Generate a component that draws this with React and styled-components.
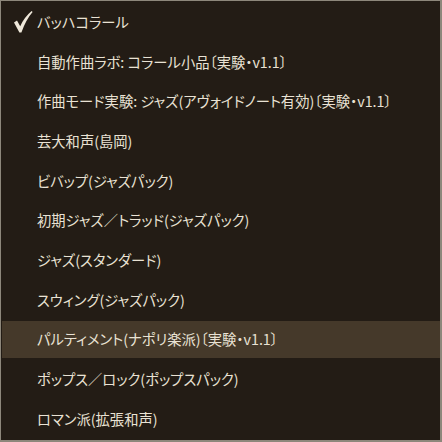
import React from 'react'
import styled, { createGlobalStyle } from 'styled-components'

const GlobalStyle = createGlobalStyle`
  html, body {
    margin: 0;
    padding: 0;
    background: #231c15;
  }
  * { box-sizing: border-box; }
`;

const items = [
  { label: "バッハコラール", checked: true },
  { label: "自動作曲ラボ: コラール小品〔実験・v1.1〕" },
  { label: "作曲モード実験: ジャズ(アヴォイドノート有効)〔実験・v1.1〕" },
  { label: "芸大和声(島岡)" },
  { label: "ビバップ(ジャズパック)" },
  { label: "初期ジャズ／トラッド(ジャズパック)" },
  { label: "ジャズ(スタンダード)" },
  { label: "スウィング(ジャズパック)" },
  { label: "パルティメント(ナポリ楽派)〔実験・v1.1〕", active: true },
  { label: "ポップス／ロック(ポップスパック)" },
  { label: "ロマン派(拡張和声)" },
];

const Check = () => (
  <svg width="19" height="22" viewBox="0 0 19 22">
    <path
      d="M0 11.5 L3 9.5 L6.2 15.2 Q10 6.5 17.6 0 L18.6 1 Q12 8.5 7.4 21.5 L5.4 21.5 Z"
      fill="#efe8da"
    />
  </svg>
);

const Menu = () => (
  <MenuBox>
    {items.map((item) => (
      <Row key={item.label} $active={item.active}>
        <CheckSlot>{item.checked && <Check />}</CheckSlot>
        <Label>{item.label}</Label>
      </Row>
    ))}
  </MenuBox>
);

const App = () => (
  <>
    <GlobalStyle />
    <Menu />
  </>
);

const MenuBox = styled.div`
  width: 442px;
  height: 442px;
  display: flex;
  flex-direction: column;
  gap: 2.7px;
  padding: 2.5px 0 2.5px 1px;
  background: #231c15;
  border-style: solid;
  border-color: #8d877b;
  border-width: 1px 2px 2px 1px;
  font-family: "Noto Sans CJK JP", "Noto Sans", sans-serif;
  font-feature-settings: "palt";
`;

const Row = styled.div`
  display: flex;
  align-items: center;
  height: 37px;
  flex-shrink: 0;
  background: ${(p) => (p.$active ? '#45392a' : 'transparent')};
`;

const CheckSlot = styled.div`
  width: 35px;
  flex-shrink: 0;
  padding-left: 12px;
  display: flex;
  align-items: center;
`;

const Label = styled.span`
  color: #e9e2d4;
  font-size: 14.3px;
  line-height: 1;
  white-space: nowrap;
`;

export default App;
